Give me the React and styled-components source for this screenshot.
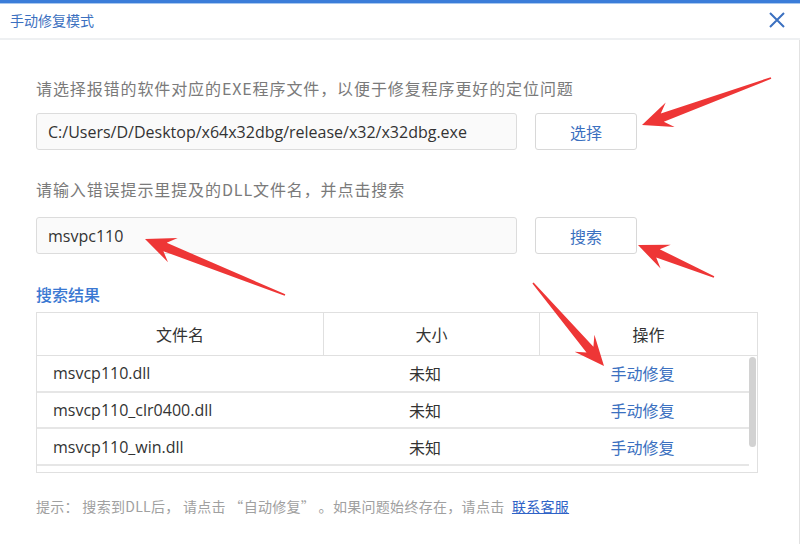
import React from 'react'
import styled, { createGlobalStyle } from 'styled-components';

const GlobalStyle = createGlobalStyle`
    html, body {
        margin: 0;
        padding: 0;
        background: #fff;
    }
    * {
        box-sizing: border-box;
    }
`;

const files = [
    { name: 'msvcp110.dll', size: '未知' },
    { name: 'msvcp110_clr0400.dll', size: '未知' },
    { name: 'msvcp110_win.dll', size: '未知' },
];

// annotation arrows: tail point -> tip point
const arrows = [
    [771, 78, 642, 125],
    [285, 295, 145, 239],
    [714, 277, 638, 245],
    [533, 283, 604, 366],
];

function arrowPoints(tx, ty, hx, hy) {
    const hl = 30, hw = 13, sw = 4.5, tw = 0.8;
    const dx = hx - tx, dy = hy - ty;
    const len = Math.hypot(dx, dy);
    const ux = dx / len, uy = dy / len;
    const nx = -uy, ny = ux;
    const bx = hx - ux * hl, by = hy - uy * hl;
    const kx = hx - ux * hl * 0.72, ky = hy - uy * hl * 0.72;
    const pts = [
        [tx + nx * tw, ty + ny * tw],
        [kx + nx * sw, ky + ny * sw],
        [bx + nx * hw, by + ny * hw],
        [hx, hy],
        [bx - nx * hw, by - ny * hw],
        [kx - nx * sw, ky - ny * sw],
        [tx - nx * tw, ty - ny * tw],
    ];
    return pts.map(p => p.map(v => v.toFixed(1)).join(',')).join(' ');
}

export default function App() {
    return (
        <>
        <GlobalStyle />
        <Dialog>
            <TopStripe />
            <Header>
                <HeaderTitle>手动修复模式</HeaderTitle>
                <CloseButton>
                    <svg width="18" height="18" viewBox="0 0 18 18">
                        <path d="M2 2 L16 16 M16 2 L2 16" stroke="#3b70c0" strokeWidth="2" fill="none" />
                    </svg>
                </CloseButton>
            </Header>
            <Body>
                <Label>请选择报错的软件对应的EXE程序文件，以便于修复程序更好的定位问题</Label>
                <FieldRow>
                    <Input>C:/Users/D/Desktop/x64x32dbg/release/x32/x32dbg.exe</Input>
                    <Button>选择</Button>
                </FieldRow>
                <Label $top={29}>请输入错误提示里提及的DLL文件名，并点击搜索</Label>
                <FieldRow $top={18}>
                    <Input>msvpc110</Input>
                    <Button>搜索</Button>
                </FieldRow>
                <SectionTitle>搜索结果</SectionTitle>
                <Table>
                    <HeadRow>
                        <HeadCell>文件名</HeadCell>
                        <HeadCell>大小</HeadCell>
                        <HeadCell $last>操作</HeadCell>
                    </HeadRow>
                    <ListArea>
                        <Rows>
                            {files.map(f => (
                                <Row key={f.name}>
                                    <NameCell>{f.name}</NameCell>
                                    <SizeCell>{f.size}</SizeCell>
                                    <ActionCell>手动修复</ActionCell>
                                </Row>
                            ))}
                        </Rows>
                        <ScrollTrack>
                            <ScrollThumb />
                        </ScrollTrack>
                    </ListArea>
                </Table>
                <Hint>
                    提示： 搜索到DLL后， 请点击 “自动修复” 。如果问题始终存在，请点击 <HintLink href="#">联系客服</HintLink>
                </Hint>
            </Body>
            <Overlay width="800" height="544" viewBox="0 0 800 544">
                {arrows.map((a, i) => (
                    <polygon key={i} points={arrowPoints(...a)} fill="#ee3636" />
                ))}
            </Overlay>
        </Dialog>
        </>
    );
};

const Dialog = styled.div`
    position: relative;
    width: 800px;
    height: 544px;
    overflow: hidden;
    background: #fff;
    font-family: "Open Sans", "Noto Sans CJK SC", sans-serif;
    color: #333;
`;
const TopStripe = styled.div`
    height: 4px;
    background: #3b7dd9;
    border-bottom: 1px solid #a9c8ef;
`;
const Header = styled.div`
    height: 36px;
    display: flex;
    align-items: center;
    justify-content: space-between;
    padding: 0 14px 0 10px;
    border-bottom: 2px solid #eef0f2;
`;
const HeaderTitle = styled.div`
    font-family: "Noto Sans CJK SC", sans-serif;
    font-size: 14px;
    color: #3b70c0;
    margin-top: -2px;
`;
const CloseButton = styled.div`
    display: flex;
    align-items: center;
    margin-top: -2px;
`;
const Body = styled.div`
    height: 504px;
    padding: 38px 0 0 36px;
    border-right: 1px solid #e2e2e2;
`;
const Label = styled.div`
    font-family: "Noto Sans CJK SC", sans-serif;
    font-size: 16px;
    line-height: 20px;
    letter-spacing: 0.9px;
    color: #7a7a7a;
    margin-top: ${p => p.$top || 0}px;
`;
const FieldRow = styled.div`
    display: flex;
    gap: 18px;
    margin-top: ${p => p.$top || 15}px;
`;
const Input = styled.div`
    width: 481px;
    height: 37px;
    border: 1px solid #dcdcdc;
    border-radius: 3px;
    background: #fafafa;
    display: flex;
    align-items: center;
    padding-left: 11px;
    font-size: 16px;
    color: #333;
`;
const Button = styled.div`
    width: 102px;
    height: 37px;
    border: 1px solid #d8d8d8;
    border-radius: 3px;
    background: #fff;
    display: flex;
    align-items: center;
    justify-content: center;
    font-family: "Noto Sans CJK SC", sans-serif;
    font-size: 16px;
    color: #3b70c0;
`;
const SectionTitle = styled.div`
    margin-top: 30px;
    font-family: "Noto Sans CJK SC", sans-serif;
    font-size: 16px;
    line-height: 20px;
    font-weight: 500;
    color: #3a78d2;
`;
const Table = styled.div`
    width: 722px;
    margin-top: 8px;
    border: 1px solid #e0e0e0;
`;
const HeadRow = styled.div`
    display: grid;
    grid-template-columns: 287px 216px 1fr;
    height: 43px;
    border-bottom: 1px solid #e0e0e0;
`;
const HeadCell = styled.div`
    display: flex;
    align-items: center;
    justify-content: center;
    font-family: "Noto Sans CJK SC", sans-serif;
    font-size: 16px;
    color: #333;
    border-right: ${p => p.$last ? 'none' : '1px solid #e0e0e0'};
`;
const ListArea = styled.div`
    display: flex;
    height: 116px;
    overflow: hidden;
`;
const Rows = styled.div`
    flex: 1;
`;
const ScrollTrack = styled.div`
    width: 8px;
    padding: 1px 1px 0 0;
`;
const ScrollThumb = styled.div`
    height: 90px;
    background: #d2d2d2;
    border-radius: 4px;
`;
const Row = styled.div`
    display: grid;
    grid-template-columns: 287px 216px 1fr;
    height: 36.7px;
    border-bottom: 2px solid #e6e6e6;
    align-items: center;
    font-size: 16px;
`;
const NameCell = styled.div`
    padding-left: 16px;
    color: #333;
`;
const SizeCell = styled.div`
    padding-left: 85px;
    font-family: "Noto Sans CJK SC", sans-serif;
    color: #333;
`;
const ActionCell = styled.div`
    text-align: center;
    padding-right: 4px;
    font-family: "Noto Sans CJK SC", sans-serif;
    color: #3b70c0;
`;
const Hint = styled.div`
    margin-top: 24px;
    font-family: "Noto Sans CJK SC", sans-serif;
    font-size: 14px;
    line-height: 18px;
    letter-spacing: 0.3px;
    color: #a0a0a0;
`;
const HintLink = styled.a`
    color: #2f63c7;
    text-decoration: underline;
    margin-left: 4px;
`;
const Overlay = styled.svg`
    position: absolute;
    left: 0;
    top: 0;
    pointer-events: none;
`;
